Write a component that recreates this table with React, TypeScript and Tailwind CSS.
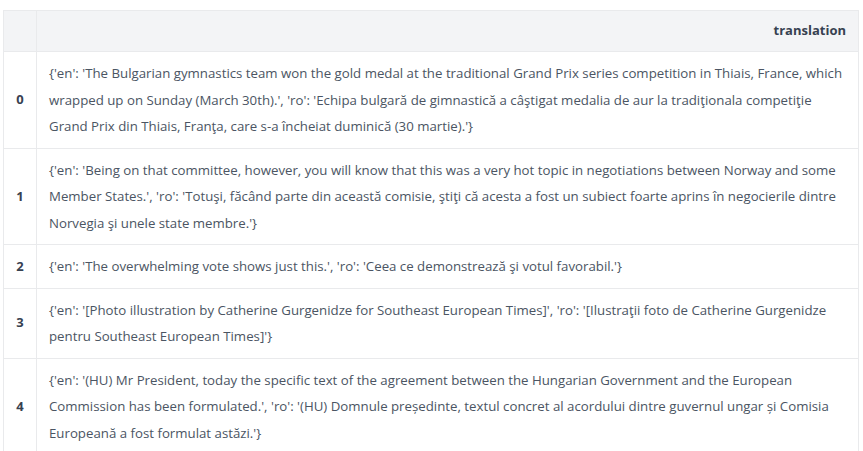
const rows: string[][] = [
  [
    "{'en': 'The Bulgarian gymnastics team won the gold medal at the traditional Grand Prix series competition in Thiais, France, which",
    "wrapped up on Sunday (March 30th).', 'ro': 'Echipa bulgară de gimnastică a câştigat medalia de aur la tradiţionala competiţie",
    "Grand Prix din Thiais, Franţa, care s-a încheiat duminică (30 martie).'}",
  ],
  [
    "{'en': 'Being on that committee, however, you will know that this was a very hot topic in negotiations between Norway and some",
    "Member States.', 'ro': 'Totuşi, făcând parte din această comisie, ştiţi că acesta a fost un subiect foarte aprins în negocierile dintre",
    "Norvegia şi unele state membre.'}",
  ],
  ["{'en': 'The overwhelming vote shows just this.', 'ro': 'Ceea ce demonstrează şi votul favorabil.'}"],
  [
    "{'en': '[Photo illustration by Catherine Gurgenidze for Southeast European Times]', 'ro': '[Ilustraţii foto de Catherine Gurgenidze",
    "pentru Southeast European Times]'}",
  ],
  [
    "{'en': '(HU) Mr President, today the specific text of the agreement between the Hungarian Government and the European",
    "Commission has been formulated.', 'ro': '(HU) Domnule președinte, textul concret al acordului dintre guvernul ungar și Comisia",
    "Europeană a fost formulat astăzi.'}",
  ],
];

const App = () => {
  return (
    <div className="bg-white min-h-[451px] pt-[10px] pl-[3px] font-['Open_Sans',sans-serif]">
      <table className="w-[856px] border-collapse text-[13.25px] text-[#4b5563]">
        <thead>
          <tr className="bg-[#f3f4f6] h-[41px]">
            <th className="w-[33px] border border-[#e9eaec]"></th>
            <th className="border border-[#e9eaec] px-3 text-right text-[13px] font-bold text-[#374151]">translation</th>
          </tr>
        </thead>
        <tbody>
          {rows.map((lines, i) => (
            <tr key={i}>
              <td className="border border-[#e9eaec] text-center text-[13px] font-bold text-[#374151]">{i}</td>
              <td className="border border-[#e9eaec] pl-3 pr-3 py-2 leading-[26.5px]">
                {lines.map((l, j) => (
                  <span key={j} className="block whitespace-nowrap leading-[26.5px]">
                    {l}
                  </span>
                ))}
              </td>
            </tr>
          ))}
        </tbody>
      </table>
    </div>
  );
};

export default App;
